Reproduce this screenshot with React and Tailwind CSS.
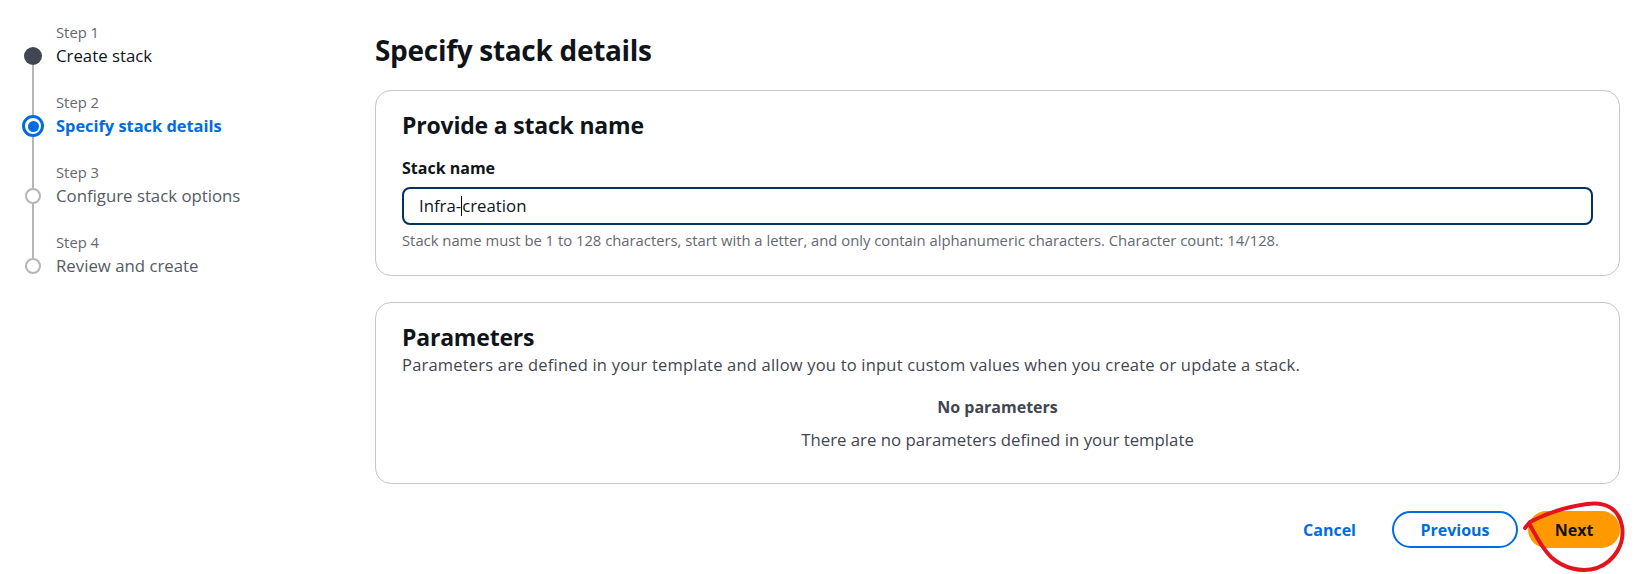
import React from 'react';

const steps = [
  { label: 'Step 1', title: 'Create stack', state: 'done' },
  { label: 'Step 2', title: 'Specify stack details', state: 'active' },
  { label: 'Step 3', title: 'Configure stack options', state: 'todo' },
  { label: 'Step 4', title: 'Review and create', state: 'todo' },
];

const StepDot = ({ state }) => {
  if (state === 'done') return <div className="w-[18px] h-[18px] rounded-full bg-[#424650]" />;
  if (state === 'active')
    return (
      <div className="w-[22px] h-[22px] rounded-full border-[3px] border-[#006ce0] flex items-center justify-center">
        <div className="w-[11px] h-[11px] rounded-full bg-[#006ce0]" />
      </div>
    );
  return <div className="w-4 h-4 rounded-full border-2 border-[#b4b4bb] bg-white" />;
};

const topGap = { done: 'h-[25px]', active: 'h-[23px]', todo: 'h-[26px]' };

const StepNav = () => (
  <nav className="w-[375px] shrink-0 pt-[22px] pl-[21px]">
    {steps.map((s, i) => {
      const last = i === steps.length - 1;
      return (
        <div key={s.label} className={`flex ${last ? '' : 'h-[70px]'}`}>
          <div className="w-6 flex flex-col items-center">
            <div className={`${topGap[s.state]} w-[2px] ${i === 0 ? '' : 'bg-[#b4b4bb]'}`} />
            <StepDot state={s.state} />
            {!last && <div className="flex-1 w-[2px] bg-[#b4b4bb]" />}
          </div>
          <div className="ml-[11px]">
            <div className="h-5 text-[14.8px] leading-5 text-[#656871]">{s.label}</div>
            <div
              className={`mt-[2px] h-6 leading-6 ${
                s.state === 'active'
                  ? 'text-[16.4px] font-bold text-[#006ce0]'
                  : s.state === 'done'
                  ? 'text-[16.8px] text-[#0f141a]'
                  : 'text-[16.8px] text-[#545b64]'
              }`}
            >
              {s.title}
            </div>
          </div>
        </div>
      );
    })}
  </nav>
);

const Card = ({ children, className = '' }) => (
  <section className={`border border-[#c6c6cd] rounded-[16px] bg-white px-[26px] pt-[19px] ${className}`}>
    {children}
  </section>
);

export default function App() {
  return (
    <div className="flex w-[1640px] h-[574px] bg-white overflow-hidden font-['Open_Sans',sans-serif] text-[#0f141a]">
      <StepNav />

      <main className="flex-1 pr-5 pt-[32px]">
        <h1 className="text-[28px] leading-9 font-bold tracking-[-0.3px]">Specify stack details</h1>

        <Card className="mt-[22px] pb-[25px]">
          <h2 className="text-[23px] leading-[30px] font-bold tracking-[-0.2px]">Provide a stack name</h2>
          <div className="mt-[17px] text-[16px] leading-[22px] font-bold">Stack name</div>
          <div className="mt-[8px] h-[38px] border-2 border-[#033160] rounded-lg flex items-center pl-[15px] text-[16.8px]">
            <span>Infra-</span>
            <span className="w-px h-5 bg-black" />
            <span>creation</span>
          </div>
          <p className="mt-[5px] text-[14.8px] leading-5 text-[#656871]">
            Stack name must be 1 to 128 characters, start with a letter, and only contain alphanumeric characters.
            Character count: 14/128.
          </p>
        </Card>

        <Card className="mt-[26px] pb-[32px]">
          <h2 className="text-[23px] leading-[30px] font-bold tracking-[-0.2px]">Parameters</h2>
          <p className="mt-[2px] text-[16.5px] leading-[22px] tracking-[0.2px] text-[#424650]">
            Parameters are defined in your template and allow you to input custom values when you create or update a
            stack.
          </p>
          <div className="mt-5 text-center leading-[22px] text-[#424650]">
            <div className="text-[16px] font-bold">No parameters</div>
            <div className="mt-[11px] text-[16.8px]">There are no parameters defined in your template</div>
          </div>
        </Card>

        <div className="mt-[27px] flex justify-end items-center gap-[10px]">
          <button className="px-5 h-[37px] mr-[6px] text-[16px] font-bold text-[#006ce0]">Cancel</button>
          <button className="h-[37px] w-[126px] rounded-full border-2 border-[#006ce0] text-[16px] font-bold text-[#006ce0]">
            Previous
          </button>
          <div className="relative">
            <button className="h-[37px] w-[92px] rounded-full bg-[#ff9900] text-[16px] font-bold text-[#0f141a]">
              Next
            </button>
            <svg
              className="absolute left-[-13px] top-[-17px] pointer-events-none"
              width="120"
              height="80"
              viewBox="0 0 120 80"
              fill="none"
            >
              <path
                d="M10 34 L15 28 C30 20 50 13 72 10 C92 7 104 16 107 32 C110 50 100 67 82 74 C66 79 48 74 36 63 C26 53 20 40 15 31"
                stroke="#e3141b"
                strokeWidth="4"
                strokeLinecap="round"
                strokeLinejoin="round"
              />
            </svg>
          </div>
        </div>
      </main>
    </div>
  );
}
